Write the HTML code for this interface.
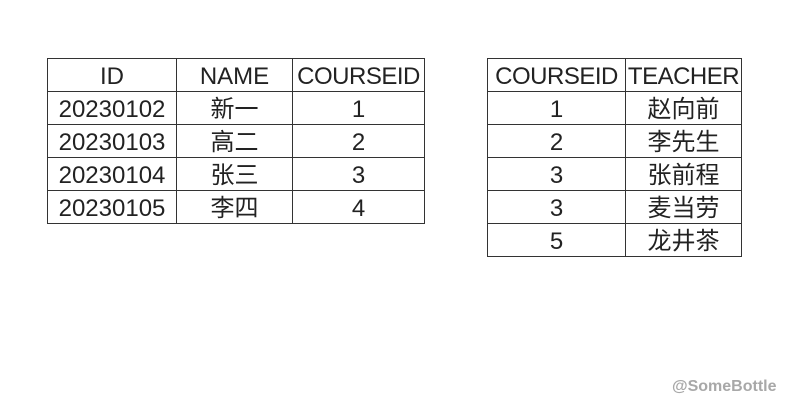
<!DOCTYPE html>
<html><head><meta charset="utf-8"><style>
body{margin:0;width:787px;height:409px;background:#fff;position:relative;overflow:hidden;font-family:"Liberation Sans","Noto Sans CJK SC",sans-serif;color:#222}
table{position:absolute;border-collapse:collapse;font-size:24px}
td{border:1px solid #333;height:29px;padding:3px 0 0 0;text-align:center;line-height:29px;white-space:nowrap;overflow:hidden}
.n{letter-spacing:-0.5px}
.wm{position:absolute;left:672px;top:378px;font-size:16px;font-weight:bold;color:#a8a8a8;font-family:"Liberation Sans",sans-serif}
</style></head><body>
<table style="left:47px;top:58px">
<tr><td style="width:128px">ID</td><td style="width:115px">NAME</td><td style="width:131px" class="n">COURSEID</td></tr>
<tr><td>20230102</td><td>新一</td><td>1</td></tr>
<tr><td>20230103</td><td>高二</td><td>2</td></tr>
<tr><td>20230104</td><td>张三</td><td>3</td></tr>
<tr><td>20230105</td><td>李四</td><td>4</td></tr>
</table>
<table style="left:487px;top:58px">
<tr><td style="width:137px" class="n">COURSEID</td><td style="width:115px" class="n">TEACHER</td></tr>
<tr><td>1</td><td>赵向前</td></tr>
<tr><td>2</td><td>李先生</td></tr>
<tr><td>3</td><td>张前程</td></tr>
<tr><td>3</td><td>麦当劳</td></tr>
<tr><td>5</td><td>龙井茶</td></tr>
</table>
<div class="wm">@SomeBottle</div>
</body></html>
